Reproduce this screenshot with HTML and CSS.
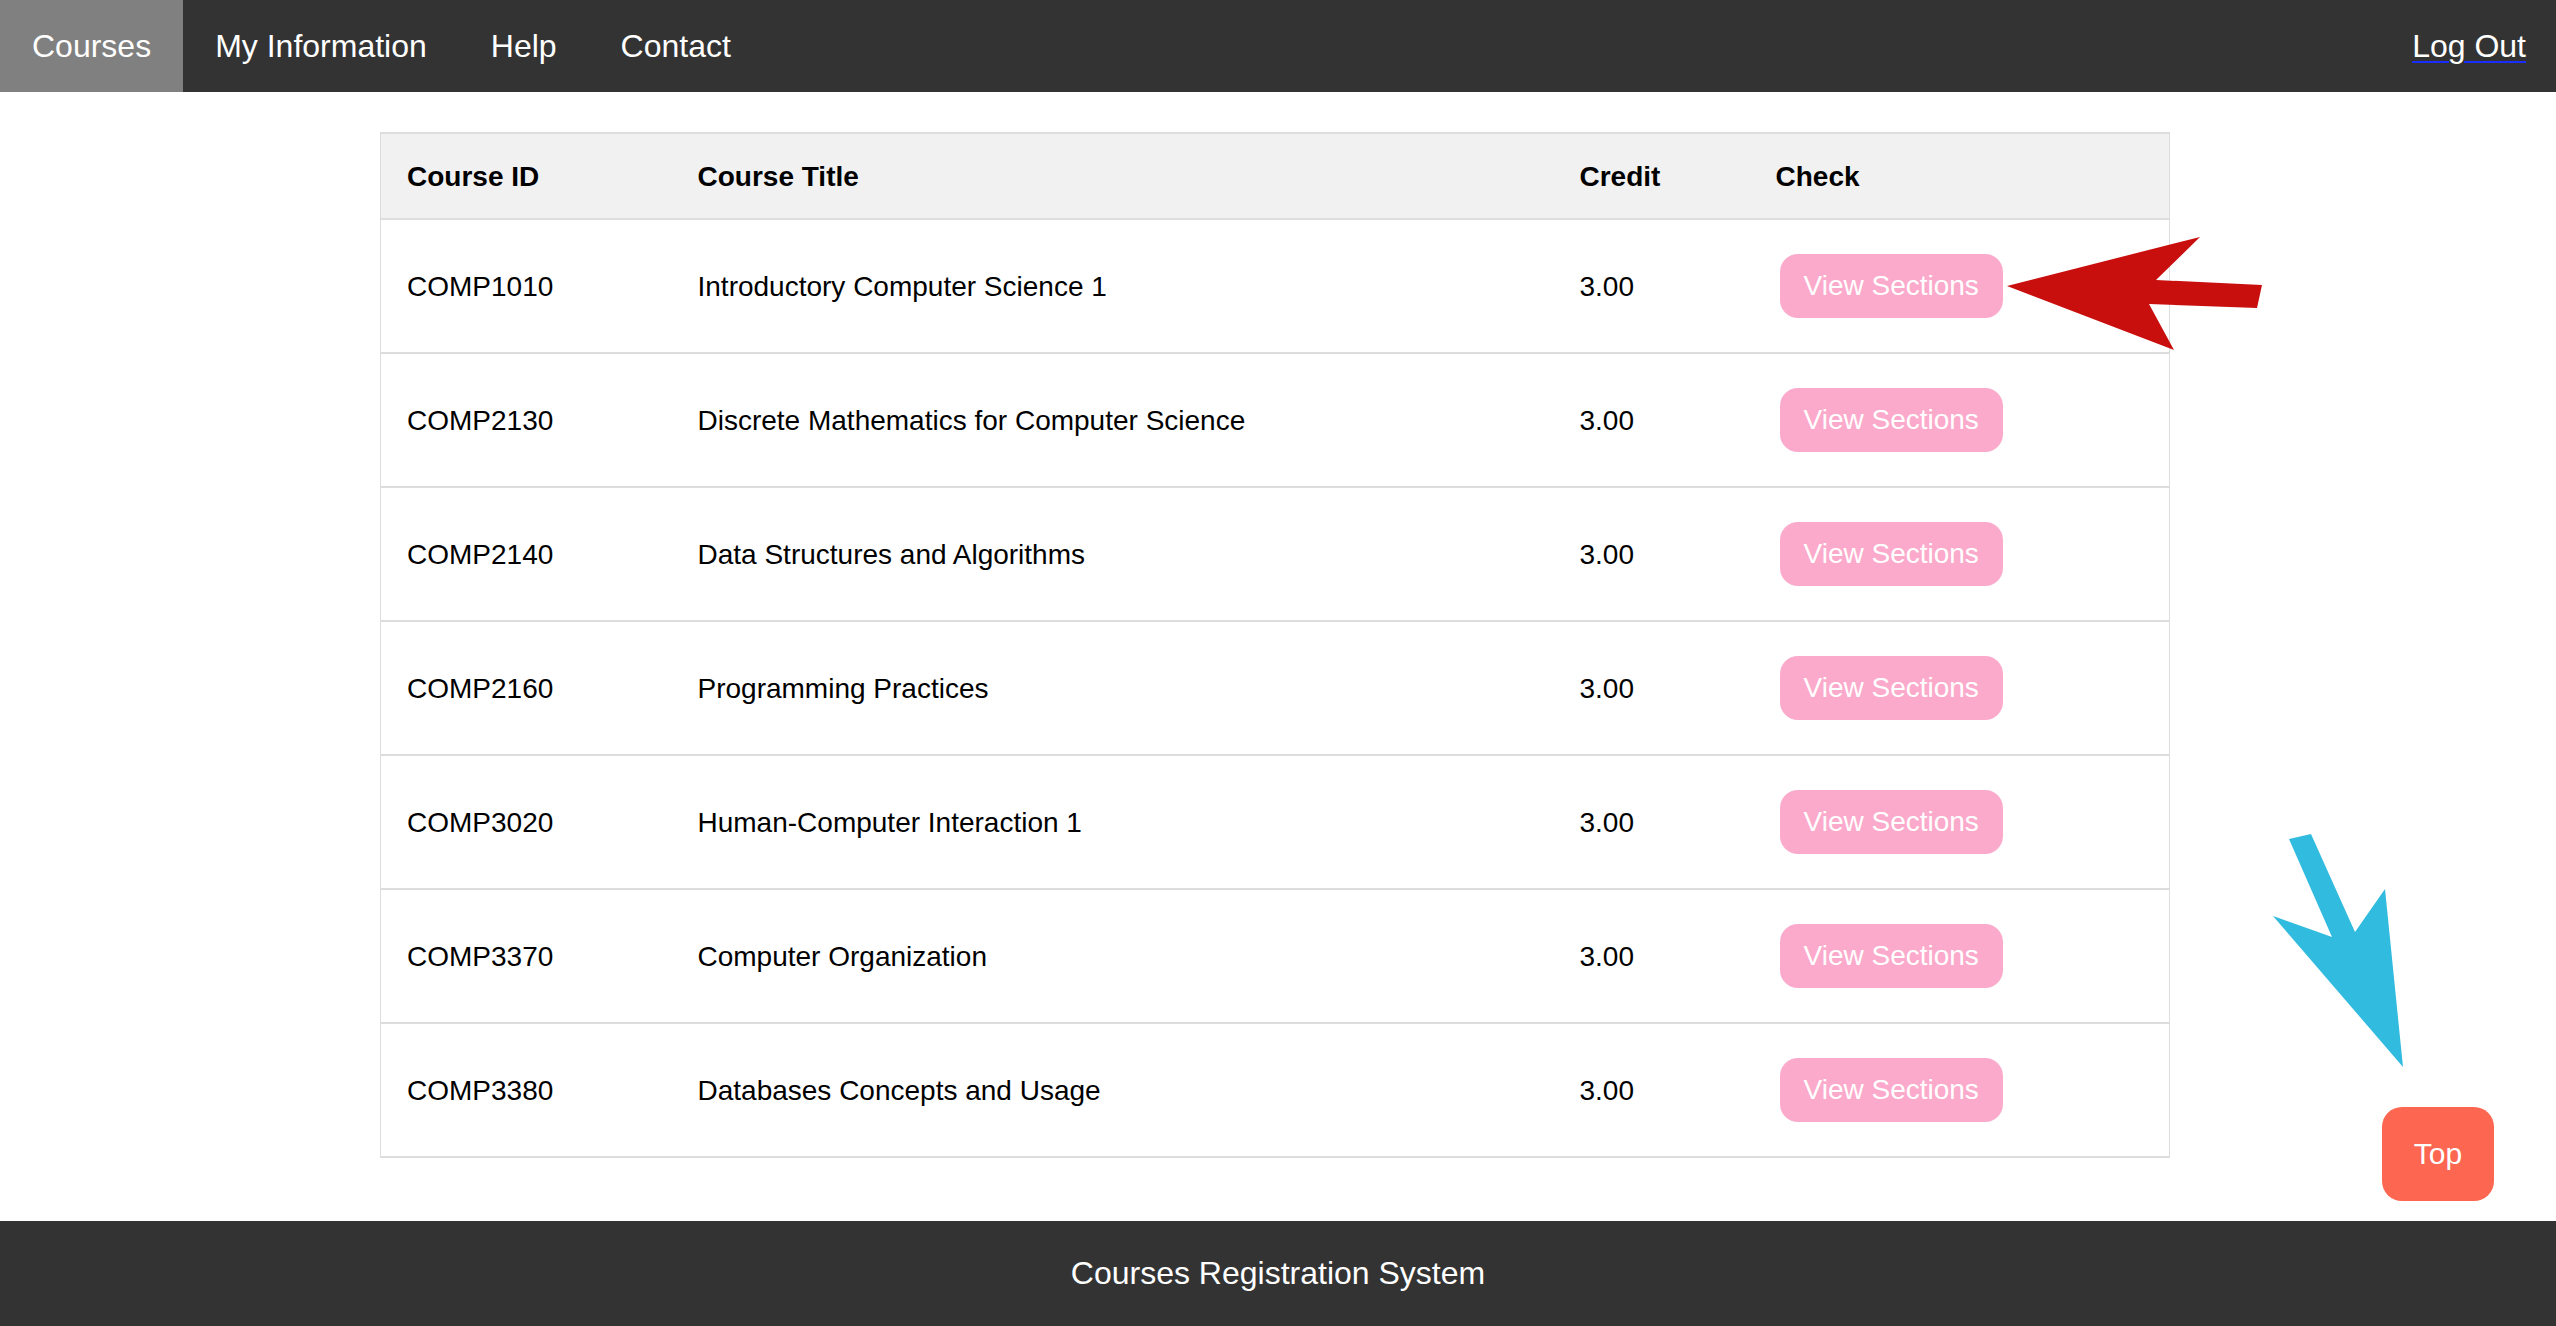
FILE: index.html
```html
<!DOCTYPE html>
<html lang="en">
<head>
<meta charset="utf-8">
<title>Courses Registration System</title>
<link rel="stylesheet" href="styles.css">
</head>
<body>
<nav class="topnav">
  <a class="nav-link active" href="#">Courses</a>
  <a class="nav-link" href="#">My Information</a>
  <a class="nav-link" href="#">Help</a>
  <a class="nav-link" href="#">Contact</a>
  <a class="nav-link logout" href="#">Log Out</a>
</nav>

<main class="content">
  <table class="courses">
    <thead>
      <tr>
        <th class="col-id">Course ID</th>
        <th class="col-title">Course Title</th>
        <th class="col-credit">Credit</th>
        <th class="col-check">Check</th>
      </tr>
    </thead>
    <tbody>
      <tr><td>COMP1010</td><td>Introductory Computer Science 1</td><td>3.00</td><td><button class="view-btn">View Sections</button></td></tr>
      <tr><td>COMP2130</td><td>Discrete Mathematics for Computer Science</td><td>3.00</td><td><button class="view-btn">View Sections</button></td></tr>
      <tr><td>COMP2140</td><td>Data Structures and Algorithms</td><td>3.00</td><td><button class="view-btn">View Sections</button></td></tr>
      <tr><td>COMP2160</td><td>Programming Practices</td><td>3.00</td><td><button class="view-btn">View Sections</button></td></tr>
      <tr><td>COMP3020</td><td>Human-Computer Interaction 1</td><td>3.00</td><td><button class="view-btn">View Sections</button></td></tr>
      <tr><td>COMP3370</td><td>Computer Organization</td><td>3.00</td><td><button class="view-btn">View Sections</button></td></tr>
      <tr><td>COMP3380</td><td>Databases Concepts and Usage</td><td>3.00</td><td><button class="view-btn">View Sections</button></td></tr>
    </tbody>
  </table>
</main>

<footer class="footer">Courses Registration System</footer>

<button class="top-btn">Top</button>

<svg class="annotations" width="2556" height="1326" viewBox="0 0 2556 1326" xmlns="http://www.w3.org/2000/svg">
  <polygon class="arrow-red" points="2007,286 2200,237 2156,280 2262,285 2257,308 2149,304 2174,350"/>
  <polygon class="arrow-blue" points="2289,839 2311,834 2355,932 2385,889 2403,1067 2273,916 2332,937"/>
</svg>
</body>
</html>
```

FILE: styles.css
```css
* {
  box-sizing: border-box;
}

html, body {
  margin: 0;
  padding: 0;
  background: #ffffff;
}

body {
  font-family: "Liberation Sans", Arial, Helvetica, sans-serif;
  color: #000;
  position: relative;
  min-height: 1326px;
}

.topnav {
  display: flex;
  background: #333333;
  height: 92px;
}

.nav-link {
  display: block;
  color: #ffffff;
  text-decoration: none;
  font-size: 32px;
  line-height: 36px;
  padding: 28px 32px;
}

.nav-link.active {
  background: #808080;
}

.nav-link.logout {
  margin-left: auto;
  padding-right: 30px;
  text-decoration: underline;
  text-decoration-color: #1a2cff;
  text-decoration-thickness: 2px;
  text-underline-offset: 4px;
}

.content {
  padding: 40px 6px 63px 0;
}

.courses {
  width: 1790px;
  margin: 0 auto;
  border-collapse: collapse;
  table-layout: fixed;
  border: 2px solid #dddddd;
  border-left-width: 1px;
  border-right-width: 1px;
}

.courses th,
.courses td {
  text-align: left;
  font-size: 28px;
  line-height: 32px;
  padding: 27px 26px 25px;
  vertical-align: middle;
}

.courses thead tr {
  background: #f1f1f1;
  border-bottom: 2px solid #dddddd;
}

.courses th {
  font-weight: bold;
}

.courses tbody tr {
  border-bottom: 2px solid #dddddd;
}

.courses td {
  padding-top: 35px;
  padding-bottom: 33px;
}

.col-id { width: 291px; }
.col-title { width: 882px; }
.col-credit { width: 196px; }
.col-check { width: auto; }

.view-btn {
  display: inline-block;
  vertical-align: top;
  margin-left: 4px;
  margin-top: -1px;
  margin-bottom: 1px;
  background: #fbaacb;
  color: #ffffff;
  border: none;
  border-radius: 18px;
  font-family: "Liberation Sans", Arial, Helvetica, sans-serif;
  font-size: 28px;
  line-height: 32px;
  padding: 16px 24px;
}

.footer {
  background: #333333;
  color: #ffffff;
  text-align: center;
  font-size: 32px;
  line-height: 36px;
  padding: 34px 0 37px;
}

.top-btn {
  position: fixed;
  right: 62px;
  bottom: 125px;
  width: 112px;
  height: 94px;
  background: #fd6650;
  color: #ffffff;
  border: none;
  border-radius: 20px;
  font-family: "Liberation Sans", Arial, Helvetica, sans-serif;
  font-size: 30px;
  line-height: 34px;
  padding: 0;
}

.annotations {
  position: absolute;
  top: 0;
  left: 0;
  pointer-events: none;
}

.arrow-red {
  fill: #c90e0e;
}

.arrow-blue {
  fill: #31bbdf;
}
```
